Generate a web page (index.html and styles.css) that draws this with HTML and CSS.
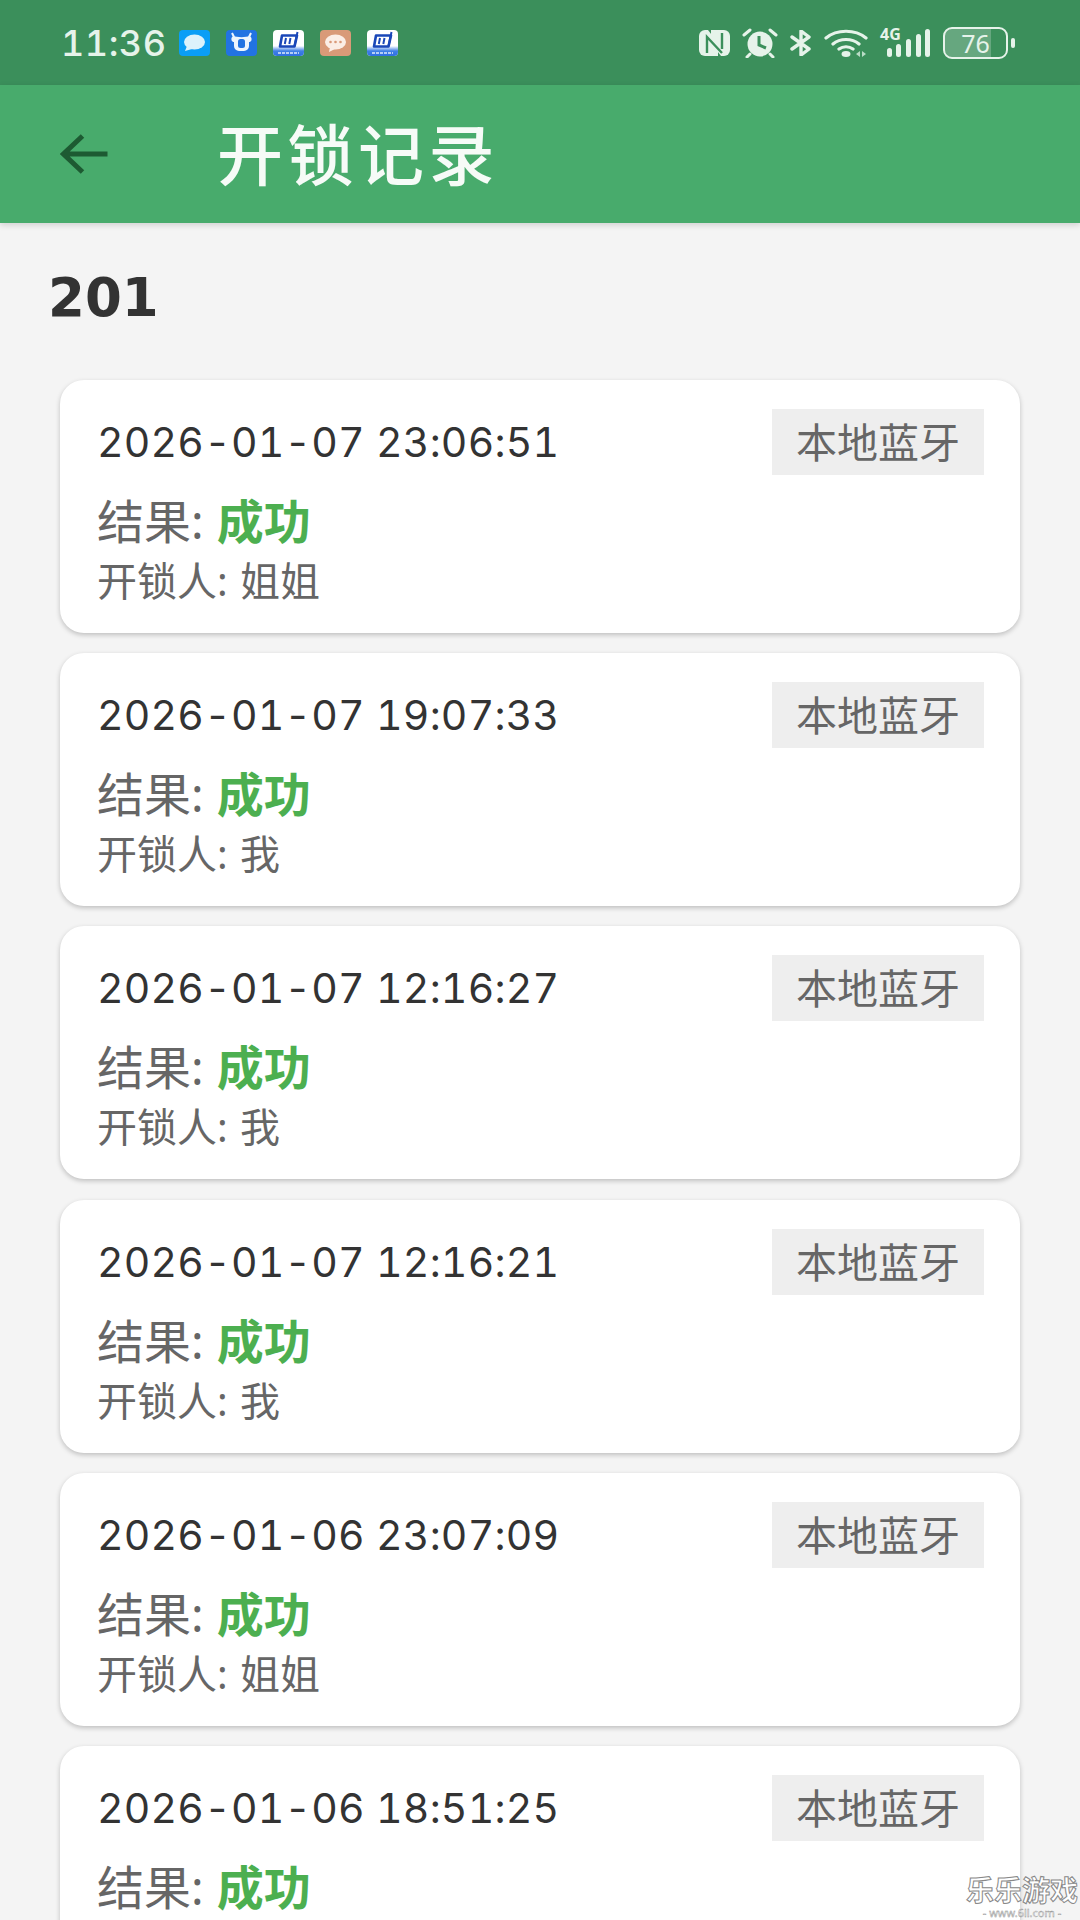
FILE: index.html
```html
<!DOCTYPE html>
<html lang="zh">
<head>
<meta charset="utf-8">
<title>开锁记录</title>
<link rel="stylesheet" href="styles.css">
</head>
<body>
<div class="screen">
  <header class="status">
    <span class="time">11:36</span>
    <div class="apps">
      <svg class="app" viewBox="0 0 31 26"><rect width="31" height="26" rx="4" fill="#0a9ef6"/><ellipse cx="15.5" cy="12" rx="10.5" ry="7.5" fill="#dcf2fb"/><path d="M8 16l-2 5 7-2z" fill="#dcf2fb"/></svg>
      <svg class="app" viewBox="0 0 31 26"><rect width="31" height="26" rx="4" fill="#2273e2"/><path d="M8 6c2 1.5 13 1.5 15 0 1 0 3 1 2.5 4-.3 1.5-1.500 2-2.500 2v4a5 5 0 0 1-5 5h-5a5 5 0 0 1-5-5v-4c-1 0-2.200-.5-2.500-2C5 7 7 6 8 6z" fill="#eef5fd"/><rect x="12" y="9" width="7" height="9" rx="2.500" fill="#2273e2"/><path d="M8 7L6 3M23 7l2-4" stroke="#eef5fd" stroke-width="2"/></svg>
      <svg class="app" viewBox="0 0 31 26"><defs><linearGradient id="band" x1="0" y1="0" x2="0" y2="1"><stop offset="0" stop-color="#fff"/><stop offset=".5" stop-color="#3f7fe6"/><stop offset="1" stop-color="#2f6fe0"/></linearGradient></defs><rect width="31" height="26" rx="4" fill="#fff"/><path d="M0 16h31v6a4 4 0 0 1-4 4H4a4 4 0 0 1-4-4z" fill="url(#band)"/><path d="M9 5.500h15l-2.500 11H7z" fill="none" stroke="#1a47b8" stroke-width="2.600" stroke-linejoin="round"/><path d="M13 8l-1.200 6M17.500 8l-1.200 6M24.500 2l-3 14" stroke="#1a47b8" stroke-width="2"/><path d="M5 23h21" stroke="#dfeafb" stroke-width="1.500" stroke-dasharray="3 1"/></svg>
      <svg class="app" viewBox="0 0 31 26"><rect width="31" height="26" rx="4" fill="#d99a78"/><ellipse cx="15.500" cy="12" rx="10.500" ry="7.500" fill="#fbeee6"/><path d="M10 17l-1 5 6-3z" fill="#fbeee6"/><circle cx="10.500" cy="12" r="1.300" fill="#d99a78"/><circle cx="15.500" cy="12" r="1.300" fill="#d99a78"/><circle cx="20.500" cy="12" r="1.300" fill="#d99a78"/></svg>
      <svg class="app" viewBox="0 0 31 26"><rect width="31" height="26" rx="4" fill="#fff"/><path d="M0 16h31v6a4 4 0 0 1-4 4H4a4 4 0 0 1-4-4z" fill="url(#band)"/><path d="M9 5.500h15l-2.500 11H7z" fill="none" stroke="#1a47b8" stroke-width="2.600" stroke-linejoin="round"/><path d="M13 8l-1.200 6M17.500 8l-1.200 6M24.500 2l-3 14" stroke="#1a47b8" stroke-width="2"/><path d="M5 23h21" stroke="#dfeafb" stroke-width="1.500" stroke-dasharray="3 1"/></svg>
    </div>
    <div class="indicators">
      <svg class="ind-nfc" viewBox="0 0 31 26"><path d="M6 0h3l10 13V26h-13a6 6 0 0 1-6-6V6a6 6 0 0 1 6-6z" fill="#e6f3ea"/><path d="M25 26h-3L12 13V0h13a6 6 0 0 1 6 6v14a6 6 0 0 1-6 6z" fill="#e6f3ea"/><path d="M8 23V7l15 16M23 19V3" fill="none" stroke="#3b8f5b" stroke-width="2.400"/></svg>
      <svg class="ind-alarm" viewBox="0 0 36 30"><circle cx="18" cy="16" r="12.500" fill="#e6f3ea"/><path d="M17 8v9l7 3" fill="none" stroke="#3b8f5b" stroke-width="3"/><path d="M2 7l6-5M34 7l-6-5M8 26l-3 3M28 26l3 3" stroke="#e6f3ea" stroke-width="3" stroke-linecap="round"/></svg>
      <svg class="ind-bt" viewBox="0 0 22 26"><path d="M2 7l17 12-8 6V1l8 6L2 19" fill="none" stroke="#e6f3ea" stroke-width="3.400" stroke-linejoin="round" stroke-linecap="round"/></svg>
      <svg class="ind-wifi" viewBox="0 0 44 28"><path d="M2 9c11-9 29-9 40 0M9 15c7-6 19-6 26 0M15 20c4-3 10-3 14 0" fill="none" stroke="#e6f3ea" stroke-width="3.200" stroke-linecap="round"/><ellipse cx="22" cy="25" rx="4.500" ry="3" fill="#e6f3ea"/><path d="M36 22l-4 3 4 3zM38 22l4 3-4 3z" fill="#b9dcc6"/></svg>
      <div class="cell">
        <span class="cell-label">4G</span>
        <svg class="ind-signal" viewBox="0 0 50 28"><rect x="7" y="19" width="5" height="9" rx="2.500" fill="#e6f3ea"/><rect x="16" y="15" width="5" height="13" rx="2.500" fill="#e6f3ea"/><rect x="26" y="10" width="5" height="18" rx="2.500" fill="#e6f3ea"/><rect x="36" y="5" width="5" height="23" rx="2.500" fill="#e6f3ea"/><rect x="45" y="0" width="5" height="28" rx="2.500" fill="#e6f3ea"/></svg>
      </div>
      <div class="battery">
        <div class="battery-body"><div class="battery-fill"></div><span class="battery-text">76</span></div>
        <div class="battery-nub"></div>
      </div>
    </div>
  </header>
  <div class="toolbar">
    <svg class="back" viewBox="0 0 48 40"><path d="M47 20H3M22 2L3 20l19 18" fill="none" stroke="#1d5a32" stroke-width="5"/></svg>
    <h1 class="title">开锁记录</h1>
  </div>
  <main class="content">
    <h2 class="room">201</h2>
    <div class="list">
      <article class="card">
        <div class="row"><span class="date">2026-01-07 23:06:51</span><span class="tag">本地蓝牙</span></div>
        <div class="result">结果: <b class="ok">成功</b></div>
        <div class="person">开锁人: 姐姐</div>
      </article>
      <article class="card">
        <div class="row"><span class="date">2026-01-07 19:07:33</span><span class="tag">本地蓝牙</span></div>
        <div class="result">结果: <b class="ok">成功</b></div>
        <div class="person">开锁人: 我</div>
      </article>
      <article class="card">
        <div class="row"><span class="date">2026-01-07 12:16:27</span><span class="tag">本地蓝牙</span></div>
        <div class="result">结果: <b class="ok">成功</b></div>
        <div class="person">开锁人: 我</div>
      </article>
      <article class="card">
        <div class="row"><span class="date">2026-01-07 12:16:21</span><span class="tag">本地蓝牙</span></div>
        <div class="result">结果: <b class="ok">成功</b></div>
        <div class="person">开锁人: 我</div>
      </article>
      <article class="card">
        <div class="row"><span class="date">2026-01-06 23:07:09</span><span class="tag">本地蓝牙</span></div>
        <div class="result">结果: <b class="ok">成功</b></div>
        <div class="person">开锁人: 姐姐</div>
      </article>
      <article class="card">
        <div class="row"><span class="date">2026-01-06 18:51:25</span><span class="tag">本地蓝牙</span></div>
        <div class="result">结果: <b class="ok">成功</b></div>
        <div class="person">开锁人: 我</div>
      </article>
    </div>
  </main>
  <div class="watermark">
    <div class="wm-main">乐乐游戏</div>
    <div class="wm-sub">- www.6ll.com -</div>
  </div>
</div>
</body>
</html>
```
FILE: styles.css
```css
* { box-sizing: border-box; margin: 0; padding: 0; }
html, body { width: 1080px; height: 1920px; overflow: hidden; }
body { font-family: "Noto Sans", "Noto Sans CJK SC", sans-serif; background: #f4f4f4; }
.screen { position: relative; width: 1080px; height: 1920px; overflow: hidden; }

.status { height: 85px; background: #3b8f5b; display: flex; align-items: center; padding: 0 65px 0 61px; color: #e6f3ea; }
.time { font-family: "Inter", sans-serif; font-variant-numeric: tabular-nums; font-feature-settings: "tnum"; font-size: 36px; font-weight: 500; letter-spacing: .5px; width: 118px; line-height: 1; flex: none; }
.apps { display: flex; gap: 16px; }
.app { width: 31px; height: 26px; display: block; }
.indicators { margin-left: auto; display: flex; align-items: center; }
.ind-nfc { width: 31px; height: 26px; }
.ind-alarm { width: 36px; height: 30px; margin-left: 12px; }
.ind-bt { width: 22px; height: 26px; margin-left: 12px; }
.ind-wifi { width: 44px; height: 28px; margin-left: 12px; }
.cell { position: relative; width: 50px; height: 28px; margin-left: 12px; }
.ind-signal { width: 50px; height: 28px; display: block; }
.cell-label { position: absolute; left: 0; top: -4px; font-size: 16px; font-weight: 700; line-height: 18px; }
.battery { display: flex; align-items: center; margin-left: 13px; }
.battery-body { position: relative; width: 65px; height: 32px; border: 2.5px solid #e6f3ea; border-radius: 9px; display: flex; align-items: center; justify-content: center; }
.battery-fill { position: absolute; left: 0; top: 0; bottom: 0; width: 76%; border-radius: 6px 0 0 6px; background: rgba(255,255,255,.22); }
.battery-text { position: relative; font-size: 25px; line-height: 26px; }
.battery-nub { width: 4px; height: 10px; margin-left: 3px; border-radius: 2px; background: #e6f3ea; }

.toolbar { height: 138px; background: #48ab6c; display: flex; align-items: center; padding-left: 60px; box-shadow: 0 2px 6px rgba(0,0,0,.15); position: relative; }
.back { width: 49px; height: 40px; flex: none; }
.title { margin-left: 108px; font-size: 66px; font-weight: 500; letter-spacing: 4.500px; color: #f6fbf7; line-height: 1; }

.content { padding: 0 60px; }
.room { font-family: "DejaVu Sans", "Noto Sans", sans-serif; font-size: 53px; font-weight: 700; color: #333; line-height: 60px; margin: 45px 0 0 -12px; }
.list { display: flex; flex-direction: column; gap: 20.2px; margin-top: 52px; }

.card { height: 253px; flex: none; background: #fff; border-radius: 24px; padding: 29px 36px 0 37px; box-shadow: 0 2px 5px rgba(0,0,0,.22); }
.row { display: flex; justify-content: space-between; align-items: center; height: 66px; }
.date { font-family: "Inter", sans-serif; font-variant-numeric: tabular-nums; font-feature-settings: "tnum"; font-size: 41px; letter-spacing: .2px; color: #333; }
.tag { width: 212px; height: 66px; background: #eee; color: #666; font-size: 41px; line-height: 66px; text-align: center; }
.result { margin-top: 16px; font-size: 47px; line-height: 60px; color: #666; }
.ok { color: #4caf50; font-weight: 700; font-size: 47px; margin-left: 1px; }
.person { font-size: 40px; word-spacing: 2px; line-height: 60px; color: #666; }

.watermark { position: absolute; right: 0; bottom: 0; width: 116px; text-align: center; pointer-events: none; }
.wm-main { font-size: 28px; font-weight: 700; line-height: 32px; color: #fff; -webkit-text-stroke: 1px #888; white-space: nowrap; }
.wm-sub { font-size: 11px; line-height: 14px; color: #fff; -webkit-text-stroke: .4px #888; white-space: nowrap; }
```
